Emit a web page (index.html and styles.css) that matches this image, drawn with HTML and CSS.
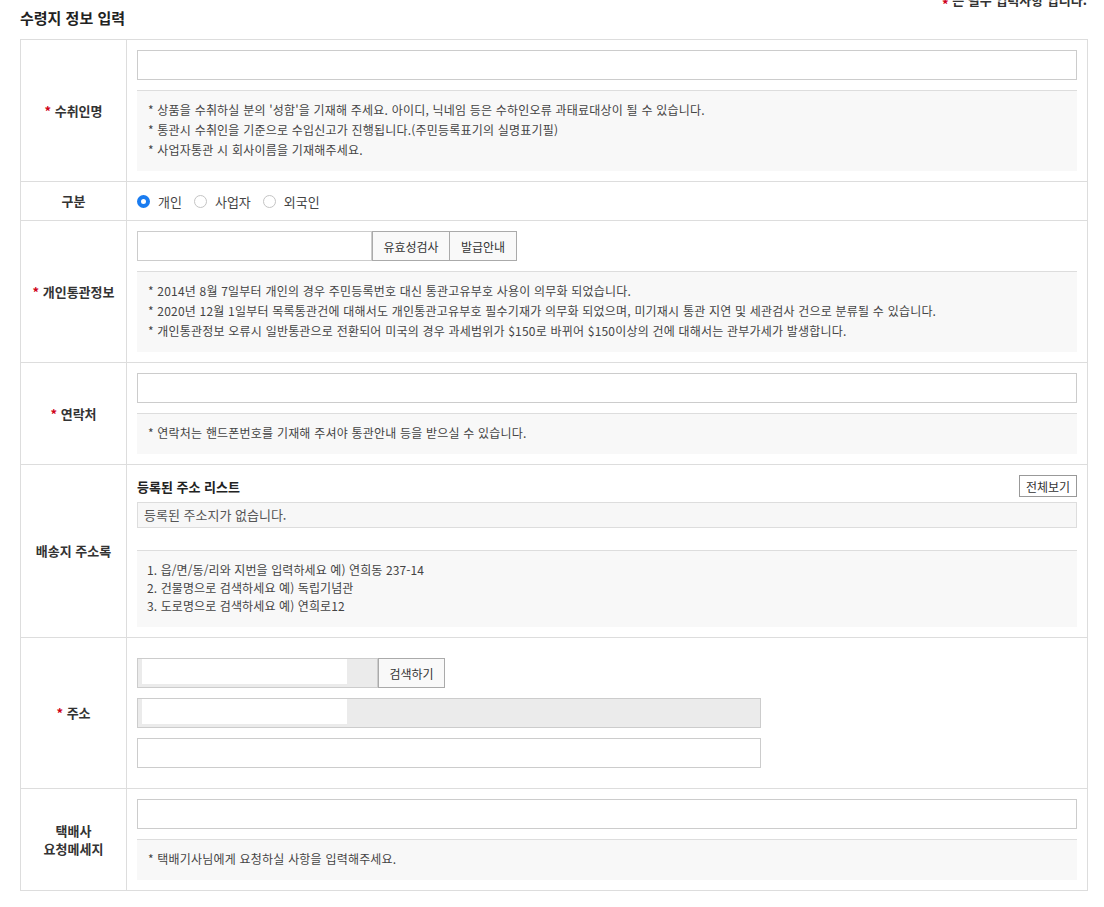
FILE: index.html
```html
<!DOCTYPE html>
<html lang="ko">
<head>
    <meta charset="UTF-8">
    <meta name="viewport" content="width=device-width, initial-scale=1.0">
    <title>수령지 정보 입력</title>
    <link rel="stylesheet" href="styles.css">
</head>
<body>
    <div class="wrap">
        <div class="section-head">
            <h2 class="section-title">수령지 정보 입력</h2>
            <p class="required-note"><span class="req">*</span> 는 필수 입력사항 입니다.</p>
        </div>

        <table class="form-table">
            <colgroup>
                <col class="col-label">
                <col>
            </colgroup>
            <tr class="row-name">
                <th><span class="req">*</span> 수취인명</th>
                <td>
                    <input type="text" class="field field-full">
                    <div class="help">
                        <p>* 상품을 수취하실 분의 '성함'을 기재해 주세요. 아이디, 닉네임 등은 수하인오류 과태료대상이 될 수 있습니다.</p>
                        <p>* 통관시 수취인을 기준으로 수입신고가 진행됩니다.(주민등록표기의 실명표기필)</p>
                        <p>* 사업자통관 시 회사이름을 기재해주세요.</p>
                    </div>
                </td>
            </tr>
            <tr class="row-type">
                <th>구분</th>
                <td>
                    <div class="radio-group">
                        <label class="radio"><input type="radio" name="type" checked> 개인</label>
                        <label class="radio"><input type="radio" name="type"> 사업자</label>
                        <label class="radio"><input type="radio" name="type"> 외국인</label>
                    </div>
                </td>
            </tr>
            <tr>
                <th><span class="req">*</span> 개인통관정보</th>
                <td>
                    <div class="inline-field">
                        <input type="text" class="field field-customs">
                        <button class="btn btn-check">유효성검사</button>
                        <button class="btn btn-guide">발급안내</button>
                    </div>
                    <div class="help">
                        <p>* 2014년 8월 7일부터 개인의 경우 주민등록번호 대신 통관고유부호 사용이 의무화 되었습니다.</p>
                        <p>* 2020년 12월 1일부터 목록통관건에 대해서도 개인통관고유부호 필수기재가 의무화 되었으며, 미기재시 통관 지연 및 세관검사 건으로 분류될 수 있습니다.</p>
                        <p>* 개인통관정보 오류시 일반통관으로 전환되어 미국의 경우 과세범위가 $150로 바뀌어 $150이상의 건에 대해서는 관부가세가 발생합니다.</p>
                    </div>
                </td>
            </tr>
            <tr>
                <th><span class="req">*</span> 연락처</th>
                <td>
                    <input type="text" class="field field-full">
                    <div class="help">
                        <p>* 연락처는 핸드폰번호를 기재해 주셔야 통관안내 등을 받으실 수 있습니다.</p>
                    </div>
                </td>
            </tr>
            <tr>
                <th>배송지 주소록</th>
                <td>
                    <div class="book-head">
                        <strong class="book-title">등록된 주소 리스트</strong>
                        <button class="btn btn-all">전체보기</button>
                    </div>
                    <div class="book-list">등록된 주소지가 없습니다.</div>
                    <div class="help help-list">
                        <p>1. 읍/면/동/리와 지번을 입력하세요 예) 연희동 237-14</p>
                        <p>2. 건물명으로 검색하세요 예) 독립기념관</p>
                        <p>3. 도로명으로 검색하세요 예) 연희로12</p>
                    </div>
                </td>
            </tr>
            <tr class="row-addr">
                <th><span class="req">*</span> 주소</th>
                <td>
                    <div class="inline-field">
                        <input type="text" class="field field-zip" readonly>
                        <button class="btn btn-search">검색하기</button>
                    </div>
                    <input type="text" class="field field-addr field-locked" readonly>
                    <input type="text" class="field field-addr">
                </td>
            </tr>
            <tr>
                <th>택배사<br>요청메세지</th>
                <td>
                    <input type="text" class="field field-full">
                    <div class="help">
                        <p>* 택배기사님에게 요청하실 사항을 입력해주세요.</p>
                    </div>
                </td>
            </tr>
        </table>
    </div>
</body>
</html>
```

FILE: styles.css
```css
body {
    margin: 0;
    font-family: "Noto Sans CJK KR", "Noto Sans", sans-serif;
    color: #333;
    background-color: #fff;
    overflow: hidden;
}

.wrap {
    padding: 0 16px 0 20px;
}

.section-head {
    display: flex;
    justify-content: space-between;
    padding-top: 8px;
    margin-bottom: 11px;
}

.section-title {
    margin: 0;
    font-size: 15px;
    line-height: 20px;
    font-weight: bold;
    color: #222;
}

.required-note {
    margin: -18px 1px 0 0;
    font-size: 13px;
    line-height: 20px;
    font-weight: bold;
    color: #333;
}

.required-note .req {
    vertical-align: -4px;
}

.req {
    color: #d0021b;
    font-weight: bold;
}

.form-table {
    width: 100%;
    border-collapse: collapse;
    border: 1px solid #ddd;
}

.col-label {
    width: 106px;
}

.form-table th {
    border: 1px solid #ddd;
    background-color: #fff;
    font-size: 13px;
    line-height: 18px;
    font-weight: bold;
    color: #333;
    text-align: center;
    vertical-align: middle;
    padding: 0 4px;
}

.form-table td {
    border: 1px solid #ddd;
    padding: 10px;
    vertical-align: top;
}

.field {
    display: block;
    box-sizing: border-box;
    height: 30px;
    border: 1px solid #ccc;
    background-color: #fff;
    font-family: inherit;
    font-size: 12px;
    padding: 0 6px;
    outline: none;
}

.field-full {
    width: 100%;
}

.help {
    margin-top: 10px;
    border-top: 1px solid #ddd;
    background-color: #f8f8f8;
    padding: 9px 11px 11px;
    font-size: 12px;
    line-height: 20px;
    letter-spacing: 0.2px;
    color: #444;
}

.help p {
    margin: 0;
}

.help-list {
    margin-top: 22px;
    padding: 10px 10px 12px;
    line-height: 18px;
    letter-spacing: 0.1px;
}

.radio-group {
    display: flex;
    align-items: center;
    height: 18px;
    font-size: 13px;
    color: #444;
}

.radio {
    display: inline-flex;
    align-items: center;
    gap: 8px;
    margin-right: 12px;
}

.radio input {
    appearance: none;
    box-sizing: border-box;
    margin: 0;
    width: 13px;
    height: 13px;
    border: 1px solid #c4c4c4;
    border-radius: 50%;
    background-color: #fff;
}

.radio input:checked {
    border: 4px solid #1a7cf0;
    background-color: #fff;
}

.inline-field {
    display: flex;
}

.btn {
    box-sizing: border-box;
    height: 30px;
    border: 1px solid #aaa;
    background-color: #f9f9f9;
    font-family: inherit;
    font-size: 12px;
    color: #333;
    padding: 0;
    cursor: pointer;
}

.field-customs {
    width: 235px;
}

.btn-check {
    width: 78px;
}

.btn-guide {
    width: 67px;
    border-left: none;
}

.book-head {
    display: flex;
    justify-content: space-between;
    align-items: center;
    height: 22px;
}

.book-title {
    font-size: 13px;
    font-weight: bold;
    color: #222;
}

.btn-all {
    width: 58px;
    height: 22px;
    border-color: #999;
    background-color: #fff;
}

.book-list {
    margin-top: 5px;
    box-sizing: border-box;
    height: 26px;
    border: 1px solid #ddd;
    background-color: #f7f7f7;
    padding: 0 6px;
    font-size: 13px;
    line-height: 24px;
    color: #555;
}

.row-addr td {
    padding: 20px 10px;
}

.field-zip,
.field-locked {
    background: linear-gradient(#fff, #fff) no-repeat 4px 0 / 205px 25px, #ebebeb;
}

.field-zip {
    width: 241px;
}

.btn-search {
    width: 67px;
}

.field-addr {
    width: 624px;
    margin-top: 10px;
}
```
